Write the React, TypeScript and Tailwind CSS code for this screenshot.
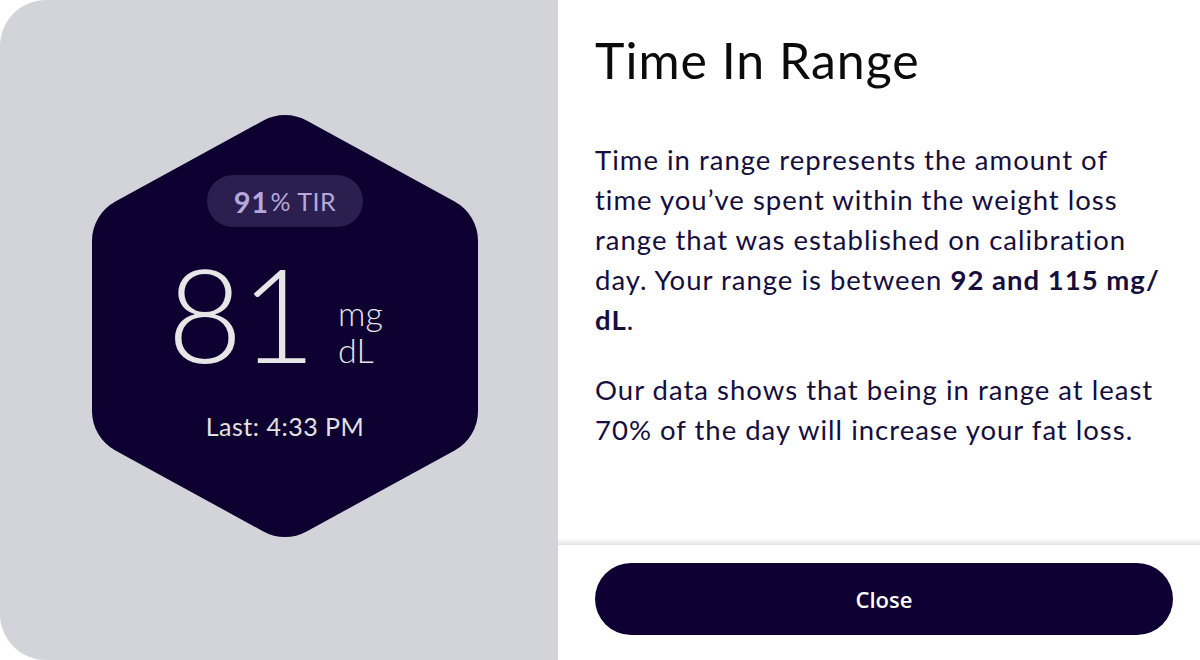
import React from 'react';

const font = { fontFamily: 'Lato, "Noto Sans", sans-serif' };

const Hexagon: React.FC = () => {
  // inner polygon drawn with a thick round-joined stroke = rounded corners
  const points = '193,45 341,126 341,296 193,377 45,296 45,126';
  return (
    <svg className="absolute inset-0" width="386" height="422" viewBox="0 0 386 422">
      <polygon points={points} fill="#0d0031" stroke="#0d0031" strokeWidth="90" strokeLinejoin="round" />
    </svg>
  );
};

export default function App() {
  return (
    <div className="w-[1200px] h-[660px] flex bg-white overflow-hidden" style={font}>
      <div className="w-[558px] h-full bg-[#d3d4da] rounded-l-[46px] pl-[92px] pt-[115px]">
        <div className="relative w-[386px] h-[422px]">
          <Hexagon />
          <div className="absolute inset-0 flex flex-col items-center pt-[60px]">
            <div className="w-[156px] h-[52px] rounded-full bg-[#2a1f4e] flex items-center justify-center gap-[2px] text-[#b6a8da] tracking-[0.5px]">
              <span className="font-bold text-[29px] leading-none">91</span>
              <span className="text-[25px] leading-none">% TIR</span>
            </div>
            <div className="flex items-start mt-[21px] -ml-[20px]">
              <span className="text-[130px] leading-none font-light text-[#e6e6e6] tracking-[-2px]">81</span>
              <div className="flex flex-col ml-[24px] mt-[46px] text-[34px] leading-[37px] font-light text-[#e6e6e6]">
                <span>mg</span>
                <span>dL</span>
              </div>
            </div>
            <div className="mt-[33px] text-[25px] leading-[30px] tracking-[0.5px] text-[#e2e2e2]">Last: 4:33 PM</div>
          </div>
        </div>
      </div>
      <div className="flex-1 flex flex-col">
        <div className="flex-1 pl-[37px] pr-[20px] pt-[30px]">
          <h1 className="text-[50px] leading-[60px] tracking-[1px] text-[#0b0b0b]">Time In Range</h1>
          <div className="text-[27.5px] leading-[40px] tracking-[1px] text-[#160e3c]">
            <p className="mt-[50px]">
              Time in range represents the amount of
              <br />
              time you’ve spent within the weight loss
              <br />
              range that was established on calibration
              <br />
              day. Your range is between <span className="font-bold">92 and 115 mg/</span>
              <br />
              <span className="font-bold">dL</span>.
            </p>
            <p className="mt-[30px]">
              Our data shows that being in range at least
              <br />
              70% of the day will increase your fat loss.
            </p>
          </div>
        </div>
        <div className="h-[7px] bg-gradient-to-b from-white to-[#e4e4e4]" />
        <div className="pl-[37px] pr-[27px] pt-[18px] pb-[25px]">
          <button
            className="w-full h-[72px] rounded-full bg-[#0e0033] text-white text-[22px] font-semibold"
            style={{ fontFamily: '"Open Sans", "Noto Sans", sans-serif' }}
          >
            Close
          </button>
        </div>
      </div>
    </div>
  );
}
